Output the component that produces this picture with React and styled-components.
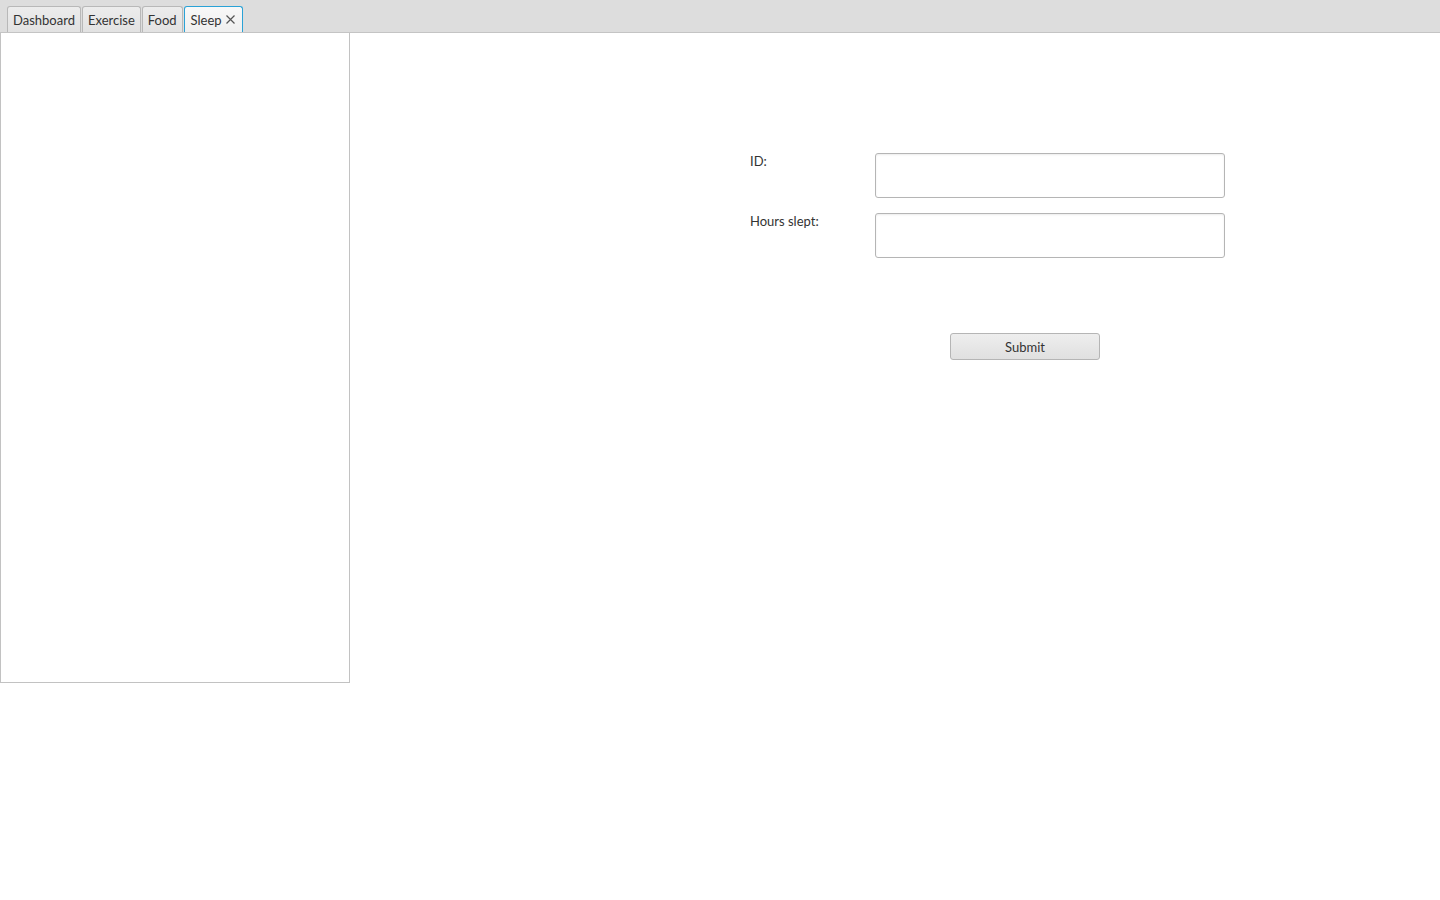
import styled, { createGlobalStyle } from 'styled-components';

const Global = createGlobalStyle`
  body {
    margin: 0;
    background: #ffffff;
    font-family: "Lato", "Open Sans", sans-serif;
    font-size: 13px;
    color: #333333;
  }
`;

const tabs = ['Dashboard', 'Exercise', 'Food', 'Sleep'];

export default function App() {
  return (
    <Page>
      <Global />
      <TabBar>
        {tabs.map((t) => (
          <Tab key={t} selected={t === 'Sleep'}>
            {t}
            {t === 'Sleep' && (
              <Close viewBox="0 0 9 9">
                <path d="M0.5 0.5 L8.5 8.5 M8.5 0.5 L0.5 8.5" />
              </Close>
            )}
          </Tab>
        ))}
      </TabBar>
      <Content>
        <SidePanel />
        <Main>
          <Form>
            <Label>ID:</Label>
            <Field />
            <Label>Hours slept:</Label>
            <Field />
          </Form>
          <Submit>Submit</Submit>
        </Main>
      </Content>
    </Page>
  );
}

const Page = styled.div`
  width: 1440px;
  height: 900px;
  display: flex;
  flex-direction: column;
`;

const TabBar = styled.div`
  height: 32px;
  background: #dddddd;
  border-bottom: 1px solid #c4c4c4;
  display: flex;
  align-items: flex-end;
  gap: 1px;
  padding-left: 7px;
  box-sizing: content-box;
`;

const Tab = styled.div`
  height: 26px;
  box-sizing: border-box;
  padding: 0 ${(p) => (p.selected ? '7px' : '5px')} 0 ${(p) => (p.selected ? '6px' : '5px')};
  display: flex;
  align-items: center;
  gap: 4px;
  border: 1px solid ${(p) => (p.selected ? '#2aa2d6' : '#b8b8b8')};
  border-bottom: none;
  border-radius: 3px 3px 0 0;
  background: ${(p) =>
    p.selected
      ? 'linear-gradient(#f8f8f8, #efefef)'
      : 'linear-gradient(#ececec, #e2e2e2)'};
  color: #333333;
  font-size: 13px;
`;

const Close = styled.svg`
  width: 9px;
  height: 9px;
  stroke: #555555;
  stroke-width: 1.2;
  fill: none;
`;

const Content = styled.div`
  display: flex;
  align-items: flex-start;
`;

const SidePanel = styled.div`
  width: 350px;
  height: 650px;
  box-sizing: border-box;
  border: 1px solid #c2c2c2;
  border-top: none;
`;

const Main = styled.div`
  padding-left: 400px;
  padding-top: 120px;
  display: flex;
  flex-direction: column;
`;

const Form = styled.div`
  display: grid;
  grid-template-columns: 125px 350px;
  row-gap: 15px;
`;

const Label = styled.div`
  padding-top: 1px;
  line-height: 14px;
  color: #333333;
`;

const Field = styled.div`
  height: 45px;
  box-sizing: border-box;
  border: 1px solid #b5b5b5;
  border-radius: 3px;
  background: #ffffff;
  box-shadow: inset 0 1px 2px rgba(0, 0, 0, 0.08);
`;

const Submit = styled.div`
  margin-top: 75px;
  margin-left: 200px;
  width: 150px;
  height: 27px;
  box-sizing: border-box;
  border: 1px solid #b5b5b5;
  border-radius: 3px;
  background: linear-gradient(#eeeeee, #e0e0e0);
  display: flex;
  align-items: center;
  justify-content: center;
  color: #333333;
`;
